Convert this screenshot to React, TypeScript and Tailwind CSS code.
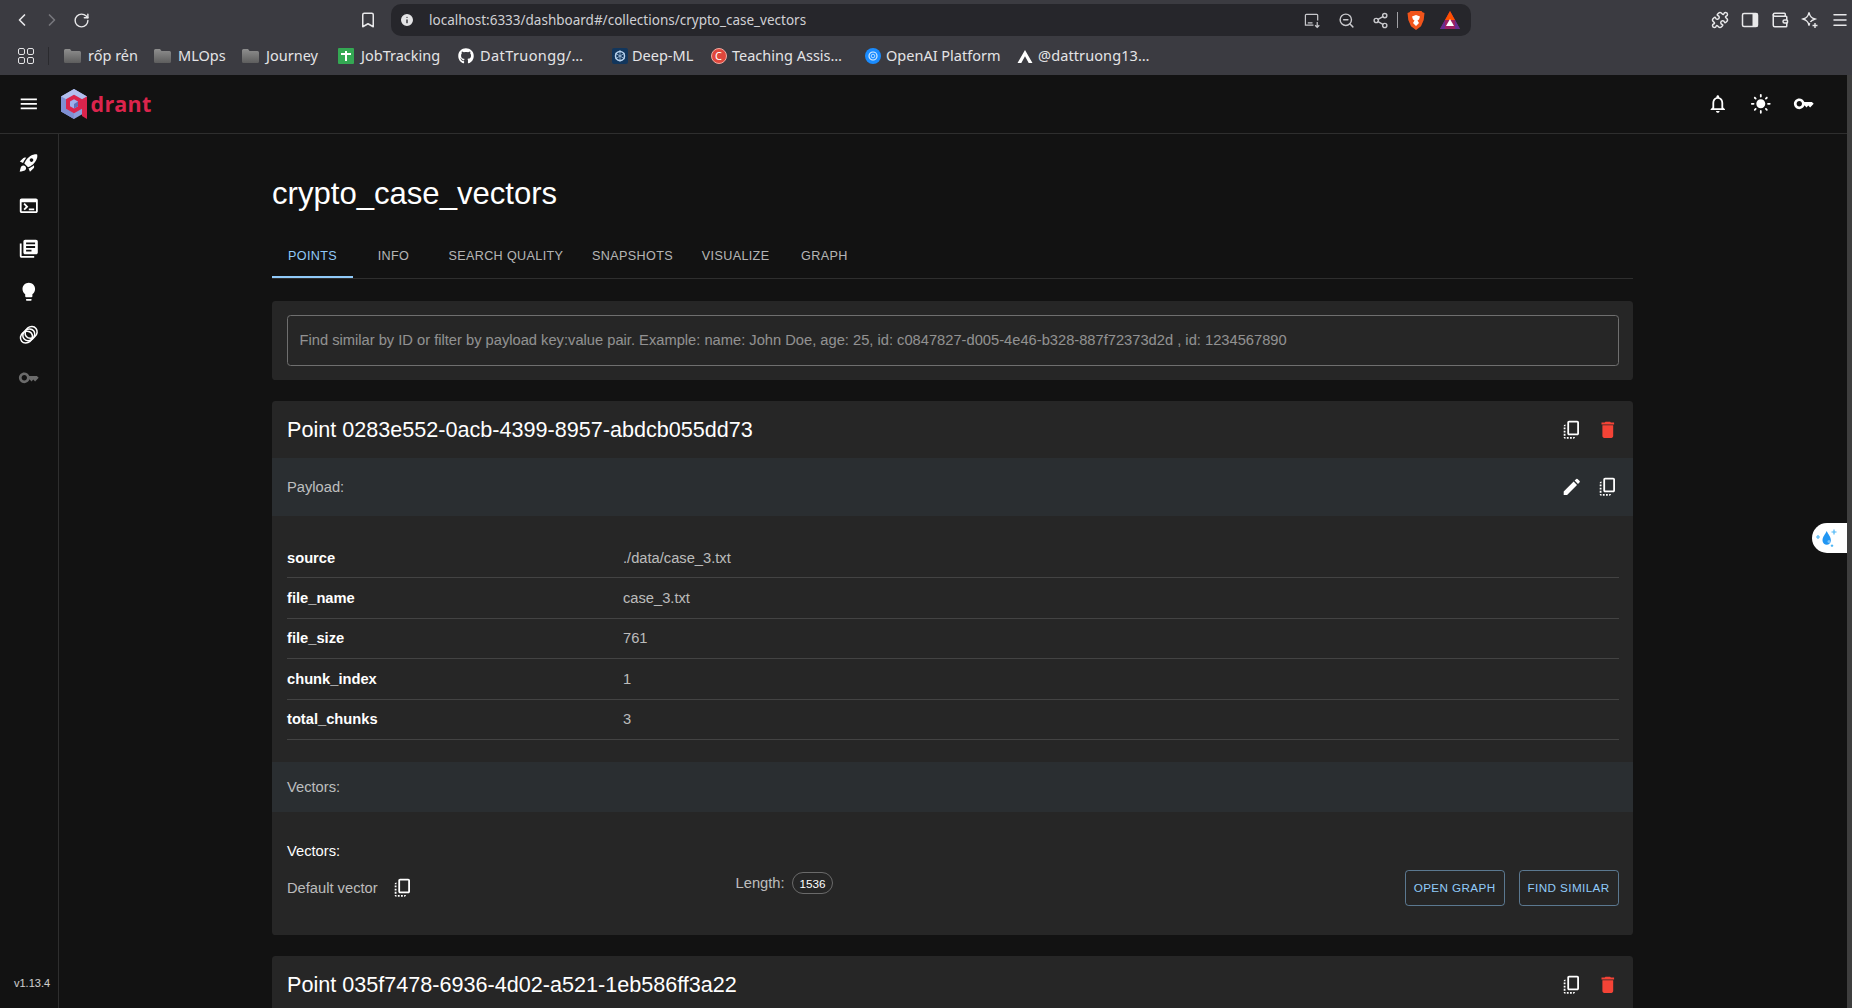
import { Bookmark, ChevronLeft, ChevronRight, Info, Menu, Puzzle, RotateCw, Share2, Wallet, ZoomOut } from 'lucide-react';
import { FaGithub } from 'react-icons/fa';
import type { ReactNode } from 'react';

const rocket = 'M9.19 6.35c-2.04 2.29-3.44 5.58-3.57 5.89L2 10.69l4.05-4.05c.47-.47 1.15-.68 1.81-.55l1.33.26zM11.17 17s3.74-1.55 5.89-3.7c5.4-5.4 4.5-9.62 4.21-10.57-.95-.3-5.17-1.19-10.57 4.21C8.55 9.09 7 12.83 7 12.83L11.17 17zm6.48-2.19c-2.29 2.04-5.58 3.44-5.89 3.57L13.31 22l4.05-4.05c.47-.47.68-1.15.55-1.81l-.26-1.33zM9 18c0 .83-.34 1.58-.88 2.12C6.94 21.3 2 22 2 22s.7-4.94 1.88-6.12C4.42 15.34 5.17 15 6 15c1.66 0 3 1.34 3 3zm4-9c0-1.1.9-2 2-2s2 .9 2 2-.9 2-2 2-2-.9-2-2z';
const terminal = 'M20 4H4c-1.1 0-2 .9-2 2v12c0 1.1.9 2 2 2h16c1.1 0 2-.9 2-2V6c0-1.1-.9-2-2-2zm0 14H4V8h16v10zm-2-1h-6v-2h6v2zM7.5 17l-1.41-1.41L8.67 13l-2.59-2.59L7.5 9l4 4-4 4z';
const library = 'M4 6H2v14c0 1.1.9 2 2 2h14v-2H4V6zm16-4H8c-1.1 0-2 .9-2 2v12c0 1.1.9 2 2 2h12c1.1 0 2-.9 2-2V4c0-1.1-.9-2-2-2zm-1 9H9V9h10v2zm-4 4H9v-2h6v2zm4-8H9V5h10v2z';
const bulb = 'M9 21c0 .55.45 1 1 1h4c.55 0 1-.45 1-1v-1H9v1zm3-19C8.14 2 5 5.14 5 9c0 2.38 1.19 4.47 3 5.74V17c0 .55.45 1 1 1h6c.55 0 1-.45 1-1v-2.26c1.81-1.27 3-3.36 3-5.74 0-3.86-3.14-7-7-7z';
const key = 'M21 10h-8.35C11.83 7.67 9.61 6 7 6c-3.31 0-6 2.69-6 6s2.69 6 6 6c2.61 0 4.83-1.67 5.65-4H13l2 2 2-2 2 2 4-4.04L21 10zM7 15c-1.65 0-3-1.35-3-3s1.35-3 3-3 3 1.35 3 3-1.35 3-3 3z';
const menu = 'M3 18h18v-2H3v2zm0-5h18v-2H3v2zm0-7v2h18V6H3z';
const bell = 'M12 22c1.1 0 2-.9 2-2h-4c0 1.1.9 2 2 2zm6-6v-5c0-3.07-1.63-5.64-4.5-6.32V4c0-.83-.67-1.5-1.5-1.5s-1.5.67-1.5 1.5v.68C7.64 5.36 6 7.92 6 11v5l-2 2v1h16v-1l-2-2zm-2 1H8v-6c0-2.48 1.51-4.5 4-4.5s4 2.02 4 4.5v6z';
const sun = 'M12 7c-2.76 0-5 2.24-5 5s2.24 5 5 5 5-2.24 5-5-2.24-5-5-5zM2 13h2c.55 0 1-.45 1-1s-.45-1-1-1H2c-.55 0-1 .45-1 1s.45 1 1 1zm18 0h2c.55 0 1-.45 1-1s-.45-1-1-1h-2c-.55 0-1 .45-1 1s.45 1 1 1zM11 2v2c0 .55.45 1 1 1s1-.45 1-1V2c0-.55-.45-1-1-1s-1 .45-1 1zm0 18v2c0 .55.45 1 1 1s1-.45 1-1v-2c0-.55-.45-1-1-1s-1 .45-1 1zM5.99 4.58c-.39-.39-1.03-.39-1.41 0-.39.39-.39 1.03 0 1.41l1.06 1.06c.39.39 1.03.39 1.41 0s.39-1.03 0-1.41L5.99 4.58zm12.37 12.37c-.39-.39-1.03-.39-1.41 0-.39.39-.39 1.03 0 1.41l1.06 1.06c.39.39 1.03.39 1.41 0 .39-.39.39-1.03 0-1.41l-1.06-1.06zm1.06-10.96c.39-.39.39-1.03 0-1.41-.39-.39-1.03-.39-1.41 0l-1.06 1.06c-.39.39-.39 1.03 0 1.41s1.03.39 1.41 0l1.06-1.06zM7.05 18.36c.39-.39.39-1.03 0-1.41-.39-.39-1.03-.39-1.41 0l-1.06 1.06c-.39.39-.39 1.03 0 1.41s1.03.39 1.41 0l1.06-1.06z';
const copy = 'M18 2H9c-1.1 0-2 .9-2 2v12c0 1.1.9 2 2 2h9c1.1 0 2-.9 2-2V4c0-1.1-.9-2-2-2zm0 14H9V4h9v12zM3 15v-2h2v2H3zm0-5.5h2v2H3v-2zM10 20h2v2h-2v-2zm-7-1.5v-2h2v2H3zM5 22c-1.1 0-2-.9-2-2h2v2zm3.5 0h-2v-2h2v2zm5 0v-2h2c0 1.1-.9 2-2 2zM5 6v2H3c0-1.1.9-2 2-2z';
const trash = 'M6 19c0 1.1.9 2 2 2h8c1.1 0 2-.9 2-2V7H6v12zM19 4h-3.5l-1-1h-5l-1 1H5v2h14V4z';
const edit = 'M3 17.25V21h3.75L17.81 9.94l-3.75-3.75L3 17.25zM20.71 7.04c.39-.39.39-1.02 0-1.41l-2.34-2.34a.9959.9959 0 0 0-1.41 0l-1.83 1.83 3.75 3.75 1.83-1.83z';

function MuiIcon({ d, className = 'text-white' }: { d: string; className?: string }) {
  return (
    <svg viewBox="0 0 24 24" className={`h-[21.6px] w-[21.6px] fill-current ${className}`}>
      <path d={d} />
    </svg>
  );
}

function IconButton({ d, className }: { d: string; className?: string }) {
  return (
    <div className="flex h-9 w-9 items-center justify-center">
      <MuiIcon d={d} className={className} />
    </div>
  );
}

function Rings() {
  return (
    <svg viewBox="0 0 24 24" className="h-[21.6px] w-[21.6px]" fill="none" stroke="white" strokeWidth="1.7">
      <ellipse cx="9.400" cy="14.600" rx="7" ry="6.200" transform="rotate(-40 9.400 14.600)" />
      <ellipse cx="12" cy="12" rx="7" ry="6.200" transform="rotate(-40 12 12)" />
      <ellipse cx="14.600" cy="9.400" rx="7" ry="6.200" transform="rotate(-40 14.600 9.400)" />
    </svg>
  );
}

function QdrantMark() {
  return (
    <svg viewBox="0 0 26 30" className="h-[30px] w-[26px]">
      <path d="M13 0 26 7.500V22.500L19 26.500 13 30 0 22.500V7.500z" fill="#8c9ddb" />
      <path d="M13 0 26 7.500 21 10.300 13 5.700 5 10.300 0 7.500z" fill="#b3bfee" />
      <path d="M0 7.500 5 10.300V19.700L13 24.300V30L0 22.500z" fill="#7f90d4" />
      <path d="M5 10.300 13 5.700 21 10.300V19.700L13 24.300 5 19.700z" fill="#dc244c" />
      <path d="M21 10.300 26 7.500V30L21 27z" fill="#dc244c" />
      <path d="M9 12.600 13 10.300 17 12.600V17.300L13 19.600 9 17.300z" fill="#9fb0ea" />
      <path d="M13 15 17 12.600V17.300L13 19.600z" fill="#5f70b8" />
    </svg>
  );
}

function Folder() {
  return (
    <svg viewBox="0 0 17 14" className="h-[14px] w-[17px]">
      <defs>
        <linearGradient id="folder" x1="0" y1="0" x2="0" y2="1">
          <stop offset="0" stopColor="#8e8e8e" />
          <stop offset="1" stopColor="#5e5e5e" />
        </linearGradient>
      </defs>
      <path d="M1.500 0H6l1.500 2h8a1.500 1.500 0 0 1 1.500 1.500v9a1.500 1.500 0 0 1-1.500 1.500h-14A1.500 1.500 0 0 1 0 12.500v-11A1.500 1.500 0 0 1 1.500 0z" fill="url(#folder)" />
    </svg>
  );
}

function BookmarkItem({ icon, label, className }: { icon: ReactNode; label: string; className: string }) {
  return (
    <div className="mr-[17px] flex items-center">
      <div className="flex w-[17px] items-center justify-center">{icon}</div>
      <span className={`whitespace-nowrap text-[14.5px] text-[#e4e4e6] ${className}`}>{label}</span>
    </div>
  );
}

function BrowserChrome() {
  const iconSm = 'h-[17px] w-[17px] text-[#c8c8cc]';
  const iconLg = 'h-[18px] w-[18px] text-[#e8e8ea]';
  return (
    <div className="h-[75px] shrink-0 bg-[#3b3b41] font-['Noto_Sans',sans-serif]">
      <div className="flex h-[37px] items-center pt-[3px]">
        <ChevronLeft className="ml-[12px] h-[20px] w-[20px] text-[#e8e8ea]" />
        <ChevronRight className="ml-[10px] h-[20px] w-[20px] text-[#77777c]" />
        <RotateCw className="ml-[11px] h-[17px] w-[17px] text-[#e8e8ea]" />
        <Bookmark className="ml-[269px] h-[18px] w-[18px] text-[#e8e8ea]" />
        <div className="ml-[14px] flex h-[32px] w-[1080px] items-center rounded-[10px] bg-[#26262b]">
          <Info className="ml-[8px] h-[16px] w-[16px] fill-[#e4e4e6] text-[#26262b]" />
          <span className="ml-[14px] text-[13.5px] text-[#d0d0d4]">
            localhost:6333/dashboard#/collections/crypto_case_vectors
          </span>
          <div className="ml-auto flex items-center">
            <svg viewBox="0 0 18 18" className="h-[17px] w-[17px]" fill="none" stroke="#c8c8cc" strokeWidth="1.300">
              <path d="M10 14H1.500V3.500a1 1 0 0 1 1-1h11a1 1 0 0 1 1 1V9M4 11.500h5M14 10.500v5.500M11.800 14l2.200 2.200 2.200-2.200" />
            </svg>
            <ZoomOut className={`ml-[17px] ${iconSm}`} />
            <Share2 className={`ml-[17px] ${iconSm}`} />
            <div className="ml-[8px] h-[16px] w-px bg-[#a0a0a4]" />
            <svg viewBox="0 0 18 20" className="ml-[9px] h-[20px] w-[18px]">
              <path d="M3.500 1h11l1 1.300 2 .7-.8 7-2.700 6.300L9 20l-5-3.700L1.300 10 .5 3l2-.7z" fill="#f1541b" />
              <path d="M5 6.500 9 5l4 1.500-1 3-1.500 1L12 13l-3 3-3-3 1.500-2.500L6 9.500z" fill="#fff" />
            </svg>
            <svg viewBox="0 0 20 18" className="ml-[15px] mr-[11px] h-[18px] w-[20px]">
              <path d="M10 0 20 18H0z" fill="#9e1f63" />
              <path d="M10 0 15 9H5z" fill="#ff5000" />
              <path d="M5 9 0 18h5zM15 9l5 9h-5z" fill="#662d91" />
              <path d="M10 8l4 7H6z" fill="#fff" />
            </svg>
          </div>
        </div>
        <div className="ml-[240px] flex items-center">
          <Puzzle className={iconLg} />
          <svg viewBox="0 0 18 18" className="ml-[12px] h-[18px] w-[18px]">
            <rect x="1.500" y="2.500" width="15" height="13" rx="1.500" fill="none" stroke="#e8e8ea" strokeWidth="1.500" />
            <rect x="11.500" y="2.500" width="5" height="13" fill="#e8e8ea" />
          </svg>
          <Wallet className={`ml-[12px] ${iconLg}`} />
          <svg viewBox="0 0 18 18" className="ml-[12px] h-[18px] w-[18px]" fill="none" stroke="#e8e8ea" strokeWidth="1.400">
            <path d="M8 1.500c.8 3.800 2 5.200 6 6.500-2.400.8-3.700 1.500-4.600 3M8 1.500C7.200 5.300 6 6.700 2 8c4 1.300 5.200 2.700 6 6.500.2-1 .4-1.700.7-2.400" />
            <path d="M14 12v5M11.500 14.500h5" />
          </svg>
          <Menu className={`ml-[12px] ${iconLg}`} />
        </div>
      </div>
      <div className="flex h-[37px] items-center">
        <div className="ml-[18px] grid h-[16px] w-[16px] grid-cols-2 gap-[2px]">
          <div className="rounded-[2px] border border-[#e4e4e6]" />
          <div className="rounded-[2px] border border-[#e4e4e6]" />
          <div className="rounded-[2px] border border-[#e4e4e6]" />
          <div className="rounded-[2px] border border-[#e4e4e6]" />
        </div>
        <div className="ml-[14px] h-[18px] w-px bg-[#2a2a2e]" />
        <div className="ml-[15px] flex items-center">
          <BookmarkItem icon={<Folder />} label="rốp rẻn" className="ml-[7px] w-[49px]" />
          <BookmarkItem icon={<Folder />} label="MLOps" className="ml-[7px] w-[47px]" />
          <BookmarkItem icon={<Folder />} label="Journey" className="ml-[7px] w-[54px]" />
          <BookmarkItem
            icon={
              <div className="relative h-[16px] w-[16px] rounded-[1px] bg-[#34a853]">
                <div className="absolute left-[3px] top-[5px] h-[2px] w-[10px] bg-white" />
                <div className="absolute left-[7px] top-[3px] h-[10px] w-[2px] bg-white" />
              </div>
            }
            label="JobTracking"
            className="ml-[7px] w-[79px]"
          />
          <BookmarkItem icon={<FaGithub className="h-[16px] w-[16px] text-white" />} label="DatTruongg/…" className="ml-[6px] w-[114px] tracking-[0.4px]" />
          <BookmarkItem
            icon={
              <svg viewBox="0 0 16 16" className="h-[16px] w-[16px]">
                <rect width="16" height="16" rx="2" fill="#12365c" />
                <circle cx="8" cy="8" r="4.500" fill="none" stroke="#b9d3ee" strokeWidth="1.500" />
                <path d="M8 2v12M3 5l10 6M13 5 3 11" stroke="#b9d3ee" strokeWidth=".7" />
              </svg>
            }
            label="Deep-ML"
            className="ml-[4px] w-[61px]"
          />
          <BookmarkItem
            icon={
              <div className="flex h-[16px] w-[16px] items-center justify-center rounded-full border border-[#f1a9a0] bg-[#e0473c] text-[11px] leading-none text-white">C</div>
            }
            label="Teaching Assis…"
            className="ml-[5px] w-[115px]"
          />
          <BookmarkItem
            icon={
              <svg viewBox="0 0 16 16" className="h-[16px] w-[16px]">
                <circle cx="8" cy="8" r="8" fill="#1a8cff" />
                <circle cx="8" cy="8" r="4" fill="none" stroke="#d8ecff" strokeWidth="1.200" />
                <circle cx="8" cy="8" r="1.800" fill="none" stroke="#d8ecff" strokeWidth=".8" />
              </svg>
            }
            label="OpenAI Platform"
            className="ml-[5px] w-[113px]"
          />
          <BookmarkItem
            icon={
              <svg viewBox="0 0 16 16" className="h-[16px] w-[16px]">
                <path d="M8 2 15.500 15h-3.800L8 8.200 4.300 15H.5z" fill="#fff" />
              </svg>
            }
            label="@dattruong13…"
            className="ml-[5px] w-[114px] tracking-[0.1px]"
          />
        </div>
      </div>
    </div>
  );
}

function AppBar() {
  return (
    <div className="flex h-[59px] shrink-0 items-center border-b border-[#2e2e2e] bg-[#121212]">
      <div className="ml-[18px]">
        <MuiIcon d={menu} />
      </div>
      <div className="ml-[21px] flex items-center">
        <QdrantMark />
        <span className="ml-[4px] font-['Open_Sans',sans-serif] text-[21.5px] font-bold leading-none tracking-[0.2px] text-[#dc244c]">drant</span>
      </div>
      <div className="ml-auto mr-[37px] flex items-center gap-[21.4px]">
        <MuiIcon d={bell} />
        <MuiIcon d={sun} />
        <MuiIcon d={key} />
      </div>
    </div>
  );
}

function Sidebar() {
  return (
    <div className="flex w-[59px] shrink-0 flex-col border-r border-[#2e2e2e]">
      <div className="flex flex-col items-center gap-[21.6px] pr-[1px] pt-[17.5px]">
        <MuiIcon d={rocket} />
        <MuiIcon d={terminal} />
        <MuiIcon d={library} />
        <MuiIcon d={bulb} />
        <Rings />
        <MuiIcon d={key} className="text-[#6b6b6b]" />
      </div>
      <div className="mt-auto mb-[19px] pl-[14px] text-[11px] leading-none text-white/80">v1.13.4</div>
    </div>
  );
}

const tabs = ['POINTS', 'INFO', 'SEARCH QUALITY', 'SNAPSHOTS', 'VISUALIZE', 'GRAPH'];

function Tabs() {
  return (
    <div className="mt-[23.5px] flex h-[44px] border-b border-[#2e2e2e]">
      {tabs.map((tab, i) => (
        <div
          key={tab}
          className={
            i === 0
              ? 'flex min-w-[81px] items-center justify-center border-b-2 border-[#90caf9] px-[14.4px] pt-[2px] text-[12.6px] font-medium tracking-[0.36px] text-[#90caf9]'
              : 'flex min-w-[81px] items-center justify-center px-[14.4px] text-[12.6px] font-medium tracking-[0.36px] text-white/70'
          }
        >
          {tab}
        </div>
      ))}
    </div>
  );
}

function CardHeader({ title }: { title: string }) {
  return (
    <div className="flex h-[57px] items-center justify-between pl-[15px] pr-[7px]">
      <h5 className="text-[21.6px] leading-none text-white">{title}</h5>
      <div className="flex">
        <IconButton d={copy} />
        <IconButton d={trash} className="text-[#f44336]" />
      </div>
    </div>
  );
}

const payload = [
  ['source', './data/case_3.txt'],
  ['file_name', 'case_3.txt'],
  ['file_size', '761'],
  ['chunk_index', '1'],
  ['total_chunks', '3'],
];

function OutlineButton({ label }: { label: string }) {
  return (
    <div className="flex h-[36px] w-[100px] items-center justify-center rounded-[3.6px] border border-[#90caf9]/50 text-[11.7px] font-medium tracking-[0.4px] text-[#90caf9]">
      {label}
    </div>
  );
}

function PointCard() {
  return (
    <div className="mt-[21px] rounded-[3.6px] bg-[#262626]">
      <CardHeader title="Point 0283e552-0acb-4399-8957-abdcb055dd73" />
      <div className="flex h-[58px] items-center justify-between bg-[#2a2e31] pl-[15px] pr-[7px]">
        <span className="text-[14.7px] text-white/70">Payload:</span>
        <div className="flex">
          <IconButton d={edit} />
          <IconButton d={copy} />
        </div>
      </div>
      <div className="pl-[15px] pr-[14.4px] pt-[22px]">
        {payload.map(([name, value]) => (
          <div key={name} className="grid h-[40.4px] grid-cols-[336px_1fr] items-center border-b border-[#434343] text-[14.7px]">
            <span className="font-bold text-white">{name}</span>
            <span className="text-white/70">{value}</span>
          </div>
        ))}
      </div>
      <div className="mt-[22px] flex h-[50px] items-center bg-[#2a2e31] pl-[15px]">
        <span className="text-[14.7px] text-white/70">Vectors:</span>
      </div>
      <div className="pb-[29px] pl-[15px] pr-[14.4px] pt-[30px]">
        <div className="text-[14.7px] leading-[18px] text-white">Vectors:</div>
        <div className="mt-[10px] flex h-[36px] items-center">
          <span className="w-[105px] text-[14.7px] text-white/70">Default vector</span>
          <MuiIcon d={copy} />
          <div className="ml-[322px] flex items-center pb-[9px]">
            <span className="text-[14.7px] text-white/70">Length:</span>
            <span className="ml-[7.5px] flex h-[22px] w-[41px] items-center justify-center rounded-full border border-[#6a6a6a] text-[11.7px] text-white">1536</span>
          </div>
          <div className="ml-auto flex gap-[14px]">
            <OutlineButton label="OPEN GRAPH" />
            <OutlineButton label="FIND SIMILAR" />
          </div>
        </div>
      </div>
    </div>
  );
}

export default function App() {
  return (
    <div className="relative flex h-[1008px] w-[1852px] flex-col overflow-hidden bg-[#121212] font-['Liberation_Sans',Arial,sans-serif]">
      <BrowserChrome />
      <AppBar />
      <div className="flex min-h-0 flex-1">
        <Sidebar />
        <main className="ml-[213px] w-[1361px]">
          <h1 className="pt-[41.5px] text-[31.1px] leading-[36px] text-white">crypto_case_vectors</h1>
          <Tabs />
          <div className="mt-[22px] h-[79px] rounded-[3.6px] bg-[#262626] pl-[15px] pr-[14.4px] pt-[14px]">
            <div className="flex h-[51px] items-center rounded-[3.6px] border border-[#6f6f6f] px-[11.5px] text-[14.7px] text-white/50">
              Find similar by ID or filter by payload key:value pair. Example: name: John Doe, age: 25, id: c0847827-d005-4e46-b328-887f72373d2d , id: 1234567890
            </div>
          </div>
          <PointCard />
          <div className="mt-[21px] rounded-[3.6px] bg-[#262626]">
            <CardHeader title="Point 035f7478-6936-4d02-a521-1eb586ff3a22" />
          </div>
        </main>
      </div>
      <div className="absolute bottom-0 right-0 top-[75px] w-[5px] bg-[#3e3e3e]" />
      <div className="absolute right-[5px] top-[523px] h-[30px] w-[35px] rounded-l-full bg-white">
        <svg viewBox="0 0 35 30" className="h-[30px] w-[35px]">
          <path d="M14.700 8C13.500 11 10.500 13.500 10.500 17.500a4.200 4.200 0 0 0 8.400 0C18.900 13.500 15.900 11 14.700 8z" fill="#2196f3" />
          <circle cx="17" cy="18.500" r="1.500" fill="#7cc4f8" />
          <path d="M22 6.500v5M19.500 9h5M6 12v4M4 14h4M20 21.500v2.500M18.800 22.700h2.400" stroke="#4db6f5" strokeWidth="1.200" fill="none" />
        </svg>
      </div>
    </div>
  );
}
